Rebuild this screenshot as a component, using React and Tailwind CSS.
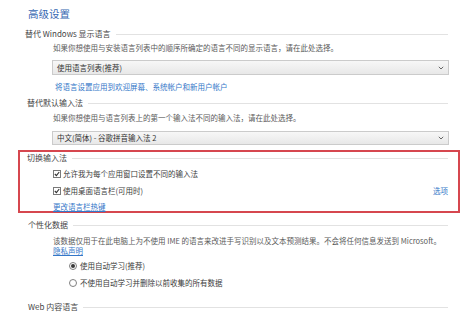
import React from "react";

const font = "font-['Noto_Sans_CJK_SC','Noto_Sans',sans-serif]";

function SectionTitle({ children, className = "" }) {
  return (
    <div className={`flex items-center ${className}`}>
      <span className="text-[8px] leading-none text-[#464646] whitespace-nowrap">{children}</span>
      <div className="ml-[5px] h-px flex-1 bg-[#e2e2e2]" />
    </div>
  );
}

function Select({ label, className = "" }) {
  return (
    <div
      className={`flex items-center justify-between border border-[#cbcbcb] bg-gradient-to-b from-[#f7f7f7] to-[#e8e8e8] pl-[4px] pr-[4px] ${className}`}
    >
      <span className="text-[7.5px] leading-none text-[#333] whitespace-nowrap">{label}</span>
      <svg width="6" height="4" viewBox="0 0 6 4" className="text-[#666]">
        <path d="M0.8 0.8 L3 3 L5.2 0.8" fill="none" stroke="currentColor" strokeWidth="1" />
      </svg>
    </div>
  );
}

function Checkbox() {
  return (
    <div className="flex h-[8px] w-[8px] items-center justify-center border border-[#7a7a7a] bg-white">
      <svg width="6" height="6" viewBox="0 0 6 6">
        <path d="M0.8 3 L2.4 4.6 L5.2 1" fill="none" stroke="#333" strokeWidth="1.1" />
      </svg>
    </div>
  );
}

function Radio({ checked }) {
  return (
    <div className="flex h-[8px] w-[8px] items-center justify-center rounded-full border border-[#808080] bg-white">
      {checked && <div className="h-[4px] w-[4px] rounded-full bg-[#3a3a3a]" />}
    </div>
  );
}

export default function App() {
  return (
    <div className={`h-[312px] w-[473px] overflow-hidden bg-white ${font}`}>
      <div className="flex h-[28px] items-center pl-[28px]">
        <span className="text-[10.5px] leading-none text-[#3868b2]">高级设置</span>
      </div>

      <SectionTitle className="h-[12px] pl-[25px] pr-[25px]">替代 Windows 显示语言</SectionTitle>
      <div className="flex h-[16px] items-center pl-[53px]">
        <span className="text-[7.5px] leading-none text-[#5a5a5a] whitespace-nowrap">
          如果你想使用与安装语言列表中的顺序所确定的语言不同的显示语言，请在此处选择。
        </span>
      </div>
      <Select label="使用语言列表(推荐)" className="mt-[4px] ml-[52px] mr-[24px] h-[15px]" />
      <div className="flex h-[24px] items-center pl-[55px]">
        <span className="text-[7.5px] leading-none text-[#3477c8] whitespace-nowrap">
          将语言设置应用到欢迎屏幕、系统帐户和新用户帐户
        </span>
      </div>

      <SectionTitle className="h-[8px] pl-[27px] pr-[25px]">替代默认输入法</SectionTitle>
      <div className="flex h-[22px] items-center pl-[53px]">
        <span className="text-[7.5px] leading-none text-[#5a5a5a] whitespace-nowrap">
          如果你想使用与语言列表上的第一个输入法不同的输入法，请在此处选择。
        </span>
      </div>
      <Select label="中文(简体) - 谷歌拼音输入法 2" className="mt-[2px] ml-[52px] mr-[24px] h-[14px]" />

      <div className="mt-[5px] ml-[18px] w-[442px] border-2 border-[#d6474f]">
        <SectionTitle className="h-[12px] pl-[7px] pr-[10px]">切换输入法</SectionTitle>
        <div className="flex h-[20px] items-center gap-[2px] pl-[33px]">
          <Checkbox />
          <span className="text-[7.5px] leading-none text-[#3c3c3c] whitespace-nowrap">
            允许我为每个应用窗口设置不同的输入法
          </span>
        </div>
        <div className="flex h-[14px] items-center justify-between pl-[33px] pr-[10px]">
          <div className="flex items-center gap-[2px]">
            <Checkbox />
            <span className="text-[7.5px] leading-none text-[#3c3c3c] whitespace-nowrap">
              使用桌面语言栏(可用时)
            </span>
          </div>
          <span className="text-[7.5px] leading-none text-[#3477c8]">选项</span>
        </div>
        <div className="flex h-[13px] items-center pl-[33px]">
          <span className="mt-[4px] text-[7.5px] leading-none text-[#3477c8] underline whitespace-nowrap">
            更改语言栏热键
          </span>
        </div>
      </div>

      <SectionTitle className="mt-[6px] h-[12px] pl-[28px] pr-[25px]">个性化数据</SectionTitle>
      <div className="mt-[5px] pl-[53px] text-[7.5px] leading-[9.5px] text-[#5a5a5a]">
        <div className="whitespace-nowrap">
          该数据仅用于在此电脑上为不使用 IME 的语言来改进手写识别以及文本预测结果。不会将任何信息发送到 Microsoft。
        </div>
        <div className="text-[#3477c8] underline">隐私声明</div>
      </div>
      <div className="mt-[3px] flex h-[16px] items-center gap-[3px] pl-[69px]">
        <Radio checked />
        <span className="text-[7.5px] leading-none text-[#3c3c3c] whitespace-nowrap">使用自动学习(推荐)</span>
      </div>
      <div className="flex h-[18px] items-center gap-[3px] pl-[69px]">
        <Radio />
        <span className="text-[7.5px] leading-none text-[#3c3c3c] whitespace-nowrap">
          不使用自动学习并删除以前收集的所有数据
        </span>
      </div>
      <SectionTitle className="h-[30px] pl-[28px] pr-[25px]">Web 内容语言</SectionTitle>
    </div>
  );
}
